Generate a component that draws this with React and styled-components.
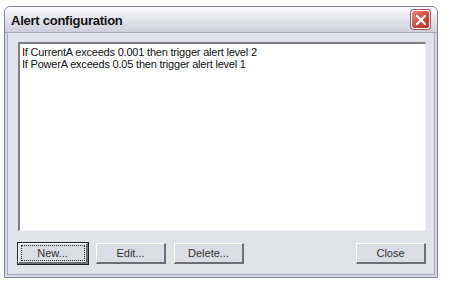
import styled, { createGlobalStyle } from "styled-components";

const GlobalStyle = createGlobalStyle`
  html, body {
    margin: 0;
    padding: 0;
    background: #ffffff;
  }
`;

const rules = [
  "If CurrentA exceeds 0.001 then trigger alert level 2",
  "If PowerA exceeds 0.05 then trigger alert level 1",
];

export default function App() {
  return (
    <>
      <GlobalStyle />
      <Page>
        <Window>
          <TitleBar>
            <Title>Alert configuration</Title>
            <CloseX aria-label="close">
              <svg width="12" height="12" viewBox="0 0 12 12">
                <path d="M2 2 L10 10 M10 2 L2 10" stroke="#fff" strokeWidth="2.2" strokeLinecap="round" />
              </svg>
            </CloseX>
          </TitleBar>
          <Body>
            <ListBox>
              {rules.map((r) => (
                <Item key={r}>{r}</Item>
              ))}
            </ListBox>
            <ButtonRow>
              <Button $default>
                <Focus>New...</Focus>
              </Button>
              <Button>Edit...</Button>
              <Button>Delete...</Button>
              <Spacer />
              <Button>Close</Button>
            </ButtonRow>
          </Body>
        </Window>
      </Page>
    </>
  );
}

const Page = styled.div`
  padding: 6px 0 0 4px;
  font-family: "Liberation Sans", Arial, sans-serif;
`;

const Window = styled.div`
  width: 434px;
  height: 272px;
  box-sizing: border-box;
  border: 1px solid #85859b;
  border-radius: 6px 6px 0 0;
  background: #e2e2ea;
  display: flex;
  flex-direction: column;
  box-shadow: inset 0 0 0 2px #d8d8e2, inset 0 0 0 3px #a9a9bb;
`;

const TitleBar = styled.div`
  height: 25px;
  flex: none;
  display: flex;
  align-items: center;
  padding: 0 7px 0 6px;
  border-radius: 5px 5px 0 0;
  background: linear-gradient(#fdfdff 0%, #e6e6ee 45%, #cfcfdc 100%);
  border-bottom: 1px solid #a4a4b6;
`;

const Title = styled.div`
  flex: 1;
  font-size: 13px;
  font-weight: bold;
  letter-spacing: -0.25px;
  color: #111;
  padding-top: 2px;
`;

const CloseX = styled.div`
  width: 19px;
  height: 19px;
  box-sizing: border-box;
  border: 1px solid #fff;
  border-radius: 3px;
  background: linear-gradient(135deg, #e98a7e, #c9463a 60%, #b43424);
  display: flex;
  align-items: center;
  justify-content: center;
  box-shadow: 0 0 0 1px #a55;
`;

const Body = styled.div`
  flex: 1;
  display: flex;
  flex-direction: column;
  padding: 9px 11px 14px 13px;
`;

const ListBox = styled.div`
  height: 189px;
  background: #fff;
  border-top: 2px solid #808080;
  border-left: 2px solid #808080;
  border-right: 1px solid #f0f0f0;
  border-bottom: 1px solid #f0f0f0;
  padding: 2px 2px;
  box-sizing: border-box;
`;

const Item = styled.div`
  font-size: 11px;
  line-height: 12px;
  letter-spacing: -0.2px;
  color: #111;
  white-space: nowrap;
`;

const ButtonRow = styled.div`
  display: flex;
  gap: 8px;
  margin-top: 12px;
`;

const Spacer = styled.div`
  flex: 1;
`;

const Button = styled.div`
  width: 70px;
  height: 21px;
  box-sizing: border-box;
  display: flex;
  align-items: center;
  justify-content: center;
  font-size: 11px;
  color: #333;
  background: #dcdce4;
  border-top: 1px solid #fff;
  border-left: 1px solid #fff;
  border-right: 2px solid #6e6e78;
  border-bottom: 2px solid #6e6e78;
  ${(p) => p.$default && `outline: 1px solid #222; outline-offset: 0;`}
`;

const Focus = styled.span`
  display: flex;
  align-items: center;
  justify-content: center;
  width: 62px;
  height: 14px;
  border: 1px dotted #333;
`;
